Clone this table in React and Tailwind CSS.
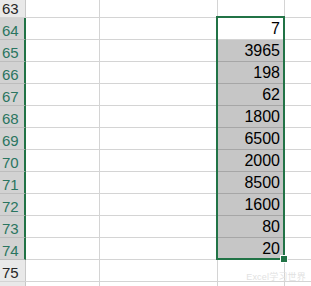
import React from 'react';

const rows = [
  { n: 63, v: null },
  { n: 64, v: '7' },
  { n: 65, v: '3965' },
  { n: 66, v: '198' },
  { n: 67, v: '62' },
  { n: 68, v: '1800' },
  { n: 69, v: '6500' },
  { n: 70, v: '2000' },
  { n: 71, v: '8500' },
  { n: 72, v: '1600' },
  { n: 73, v: '80' },
  { n: 74, v: '20' },
  { n: 75, v: null },
  { n: 76, v: null },
];

const App = () => {
  return (
    <div className="relative w-[311px] h-[286px] overflow-hidden bg-white font-['Liberation_Sans',Arial,sans-serif]">
      {rows.map((r, i) => {
        const inSel = r.n >= 64 && r.n <= 74;
        const shaded = r.n >= 65 && r.n <= 74;
        const h = i === 0 ? 'h-[18px]' : 'h-[22px]';
        return (
          <div key={r.n} className={`flex ${h} border-b border-[#d4d4d4]`}>
            {/* row header */}
            <div
              className={`w-[26px] shrink-0 flex items-end pb-[1px] pl-[2px] text-[15px] leading-none
                ${inSel ? 'bg-[#d2d2d2] text-[#2a7560] border-r-2 border-r-[#217346] border-b border-b-[#bdbdbd] -mb-px' : 'bg-[#e9e9e9] text-[#262626] border-r border-r-[#c8c8c8]'}`}
            >
              {r.n <= 75 ? r.n : ''}
            </div>
            <div className="w-[74px] shrink-0 border-r border-[#d4d4d4]" />
            <div className="w-[118px] shrink-0 border-r border-[#d4d4d4]" />
            <div
              className={`w-[67px] shrink-0 border-r border-[#d4d4d4] flex items-end justify-end pr-[4px] pb-[2px] text-[16px] leading-none text-black
                ${shaded ? 'bg-[#c6c6c6] border-b border-b-[#a6a6a6] -mb-px' : ''}`}
            >
              {r.v}
            </div>
            <div className="flex-1" />
          </div>
        );
      })}

      {/* selection outline */}
      <div className="absolute left-[216px] top-[16px] w-[69px] h-[244px] border-2 border-[#217346]" />
      {/* fill handle */}
      <div className="absolute left-[281px] top-[256px] w-[6px] h-[6px] bg-[#217346] outline outline-1 outline-white" />

      {/* watermark */}
      <div className="absolute right-[5px] top-[273px] text-[9px] leading-none text-[#e2e2e2] font-['Liberation_Sans','Noto_Sans_CJK_SC',sans-serif] tracking-[0.2px]">
        Excel学习世界
      </div>
    </div>
  );
};

export default App;
